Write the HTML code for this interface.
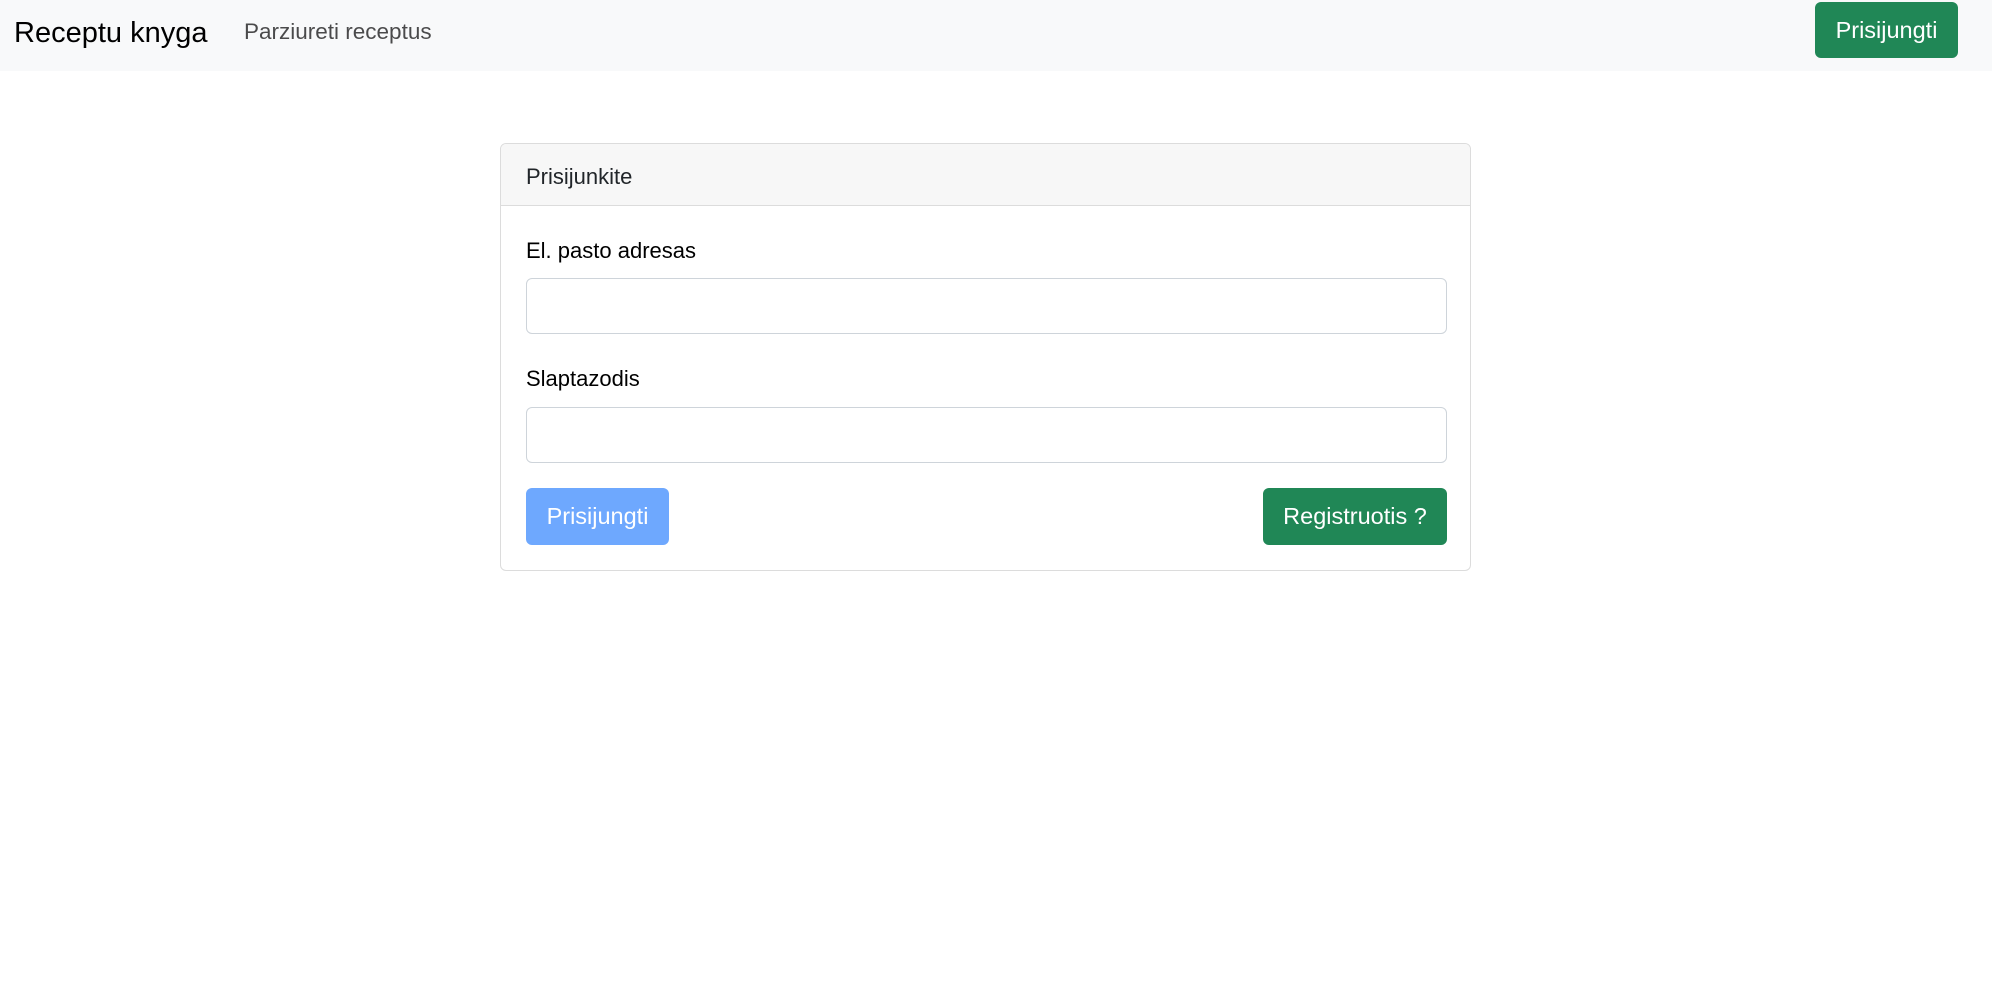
<!DOCTYPE html>
<html><head><meta charset="utf-8"><style>
*{box-sizing:border-box;margin:0;padding:0}
body{width:1992px;height:991px;background:#fff;font-family:"Liberation Sans",Arial,sans-serif;color:#212529;position:relative;overflow:hidden}
.nav{position:absolute;left:0;top:0;width:1992px;height:71px;background:#f8f9fa}
.brand{position:absolute;left:14px;top:15px;font-size:29px;line-height:36px;color:#000}
.link{position:absolute;left:244px;top:17px;font-size:22.5px;line-height:30px;color:rgba(0,0,0,.7)}
.btn{position:absolute;border-radius:6px;color:#fff;font-size:23.5px;display:flex;align-items:center;justify-content:center}
.green{background:#208756}
.card{position:absolute;left:500px;top:143px;width:971px;height:428px;border:1px solid #dcdcdc;border-radius:6px;overflow:hidden}
.ch{height:62px;background:#f7f7f7;border-bottom:1px solid #dcdcdc;font-size:22px;padding:20px 25px;line-height:26px}
.lbl{position:absolute;left:526px;font-size:22px;color:#000}
.inp{position:absolute;left:526px;width:921px;height:56px;border:1px solid #ced4da;border-radius:6px}
</style></head><body>
<div class="nav">
<div class="brand">Receptu knyga</div>
<div class="link">Parziureti receptus</div>
<div class="btn green" style="left:1815px;top:2px;width:143px;height:56px">Prisijungti</div>
</div>
<div class="card"><div class="ch">Prisijunkite</div></div>
<div class="lbl" style="top:238px">El. pasto adresas</div>
<div class="inp" style="top:278px"></div>
<div class="lbl" style="top:366px">Slaptazodis</div>
<div class="inp" style="top:407px"></div>
<div class="btn" style="left:526px;top:488px;width:143px;height:57px;background:#6ea8fe">Prisijungti</div>
<div class="btn green" style="left:1263px;top:488px;width:184px;height:57px">Registruotis ?</div>
</body></html>
